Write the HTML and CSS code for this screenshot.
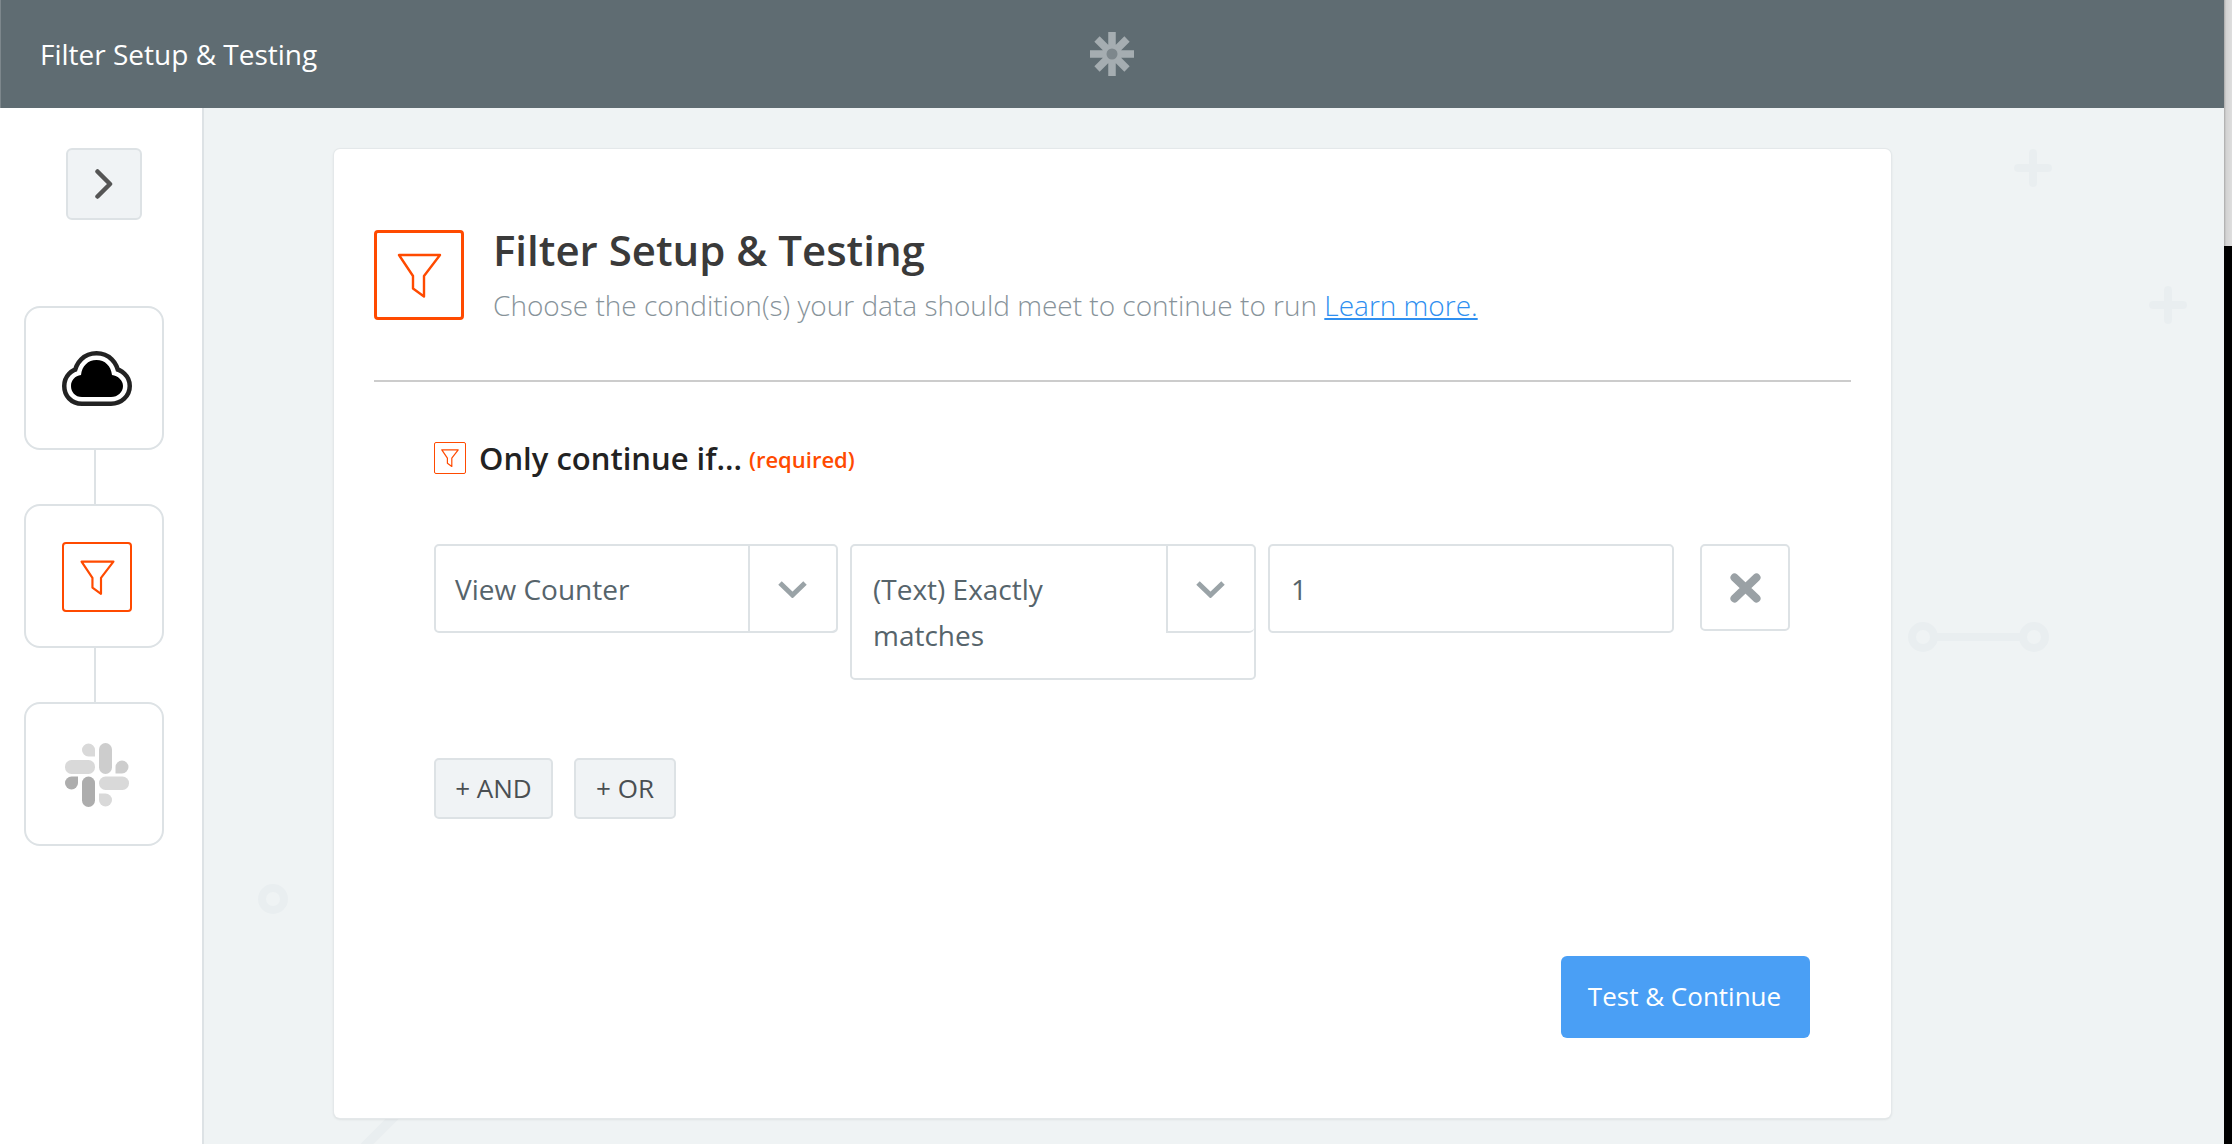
FILE: index.html
```html
<!DOCTYPE html>
<html lang="en">
<head>
<meta charset="utf-8">
<title>Filter Setup &amp; Testing</title>
<link rel="stylesheet" href="styles.css">
</head>
<body>
<svg class="defs" width="0" height="0" aria-hidden="true">
  <symbol id="funnel" viewBox="0 0 45 45"><path d="M2 2H43L27 23V43.5L16 35.5V23Z"/></symbol>
</svg>
<div class="app">
  <header class="topbar">
    <span class="topbar-title">Filter Setup &amp; Testing</span>
    <svg class="zapier" viewBox="0 0 44 44" aria-hidden="true">
      <g stroke="#a5adb1" stroke-width="7.5"><path d="M22 0V44M0 22H44M7 7L37 37M37 7L7 37"/></g>
      <circle cx="22" cy="22" r="5.5" fill="#7d878c"/>
    </svg>
  </header>
  <div class="workspace">
    <nav class="sidebar">
      <button class="toggle" type="button" aria-label="Expand">
        <svg class="toggle-icon" viewBox="0 0 18 30"><path d="M2.5 2.5L15 15L2.5 27.5"/></svg>
      </button>
      <div class="steps">
        <div class="step">
          <svg class="cloud" viewBox="0 0 70 56" aria-hidden="true">
            <path class="cloud-ring" d="M20 46C13 46 9 41 9 35C9 29 13 25 19 24C20 15 26 9 34.5 9C43 9 49 15 50 24C56 25 61 29 61 35C61 41 56 46 49 46Z"/>
            <path class="cloud-gap" d="M20 46C13 46 9 41 9 35C9 29 13 25 19 24C20 15 26 9 34.5 9C43 9 49 15 50 24C56 25 61 29 61 35C61 41 56 46 49 46Z"/>
            <path class="cloud-core" d="M20 46C13 46 9 41 9 35C9 29 13 25 19 24C20 15 26 9 34.5 9C43 9 49 15 50 24C56 25 61 29 61 35C61 41 56 46 49 46Z"/>
          </svg>
        </div>
        <div class="link"></div>
        <div class="step">
          <div class="filter-box filter-box-mid"><svg class="funnel funnel-mid"><use href="#funnel"/></svg></div>
        </div>
        <div class="link"></div>
        <div class="step">
          <svg class="slack" viewBox="0 0 64 64" aria-hidden="true">
            <path fill="#d9d9d9" d="M30 13.5H23.5A6.5 6.5 0 1 1 30 7Z"/>
            <rect fill="#cdcdcd" x="34" y="0" width="13" height="31" rx="6.5"/>
            <rect fill="#d9d9d9" x="0" y="17" width="30" height="14" rx="6.5"/>
            <path fill="#cdcdcd" d="M50.5 30.5V24A6.5 6.5 0 1 1 57 30.5Z"/>
            <rect fill="#d9d9d9" x="34" y="33.5" width="30" height="13.5" rx="6.5"/>
            <path fill="#d9d9d9" d="M34 50.5H40.5A6.5 6.5 0 1 1 34 57Z"/>
            <rect fill="#adadad" x="17" y="33.5" width="13" height="30.5" rx="6.5"/>
            <path fill="#adadad" d="M13 33.5V40A6.5 6.5 0 1 1 6.5 33.5Z"/>
          </svg>
        </div>
      </div>
    </nav>
    <main class="main">
      <svg class="backdrop" viewBox="204 108 2020 1036" aria-hidden="true">
        <g fill="none" stroke="#e9eef0">
          <path stroke-width="8" stroke-linecap="round" d="M2033 153V183M2018 168H2048M2168 290V320M2153 305H2183"/>
          <path stroke-width="8" d="M1937 637H2020"/>
          <circle stroke-width="8" cx="1923" cy="637" r="11"/>
          <circle stroke-width="8" cx="2034" cy="637" r="11"/>
          <circle stroke-width="8" cx="273" cy="899" r="11"/>
          <path stroke-width="9" d="M364 1147L400 1111"/>
        </g>
      </svg>
      <section class="card">
        <div class="card-head">
          <div class="filter-box filter-box-big"><svg class="funnel funnel-big"><use href="#funnel"/></svg></div>
          <div class="card-head-text">
            <h1 class="card-title">Filter Setup &amp; Testing</h1>
            <p class="card-sub">Choose the condition(s) your data should meet to continue to run <a class="card-link" href="#">Learn more.</a></p>
          </div>
        </div>
        <hr class="divider">
        <div class="rule">
          <div class="rule-head">
            <div class="filter-box filter-box-small"><svg class="funnel funnel-small"><use href="#funnel"/></svg></div>
            <span class="rule-title">Only continue if...</span>
            <span class="rule-req">(required)</span>
          </div>
          <div class="fields">
            <div class="select select-field">
              <div class="select-value">View Counter</div>
              <div class="select-arrow"><svg class="chevron" viewBox="0 0 31 18"><path d="M3 3L15.5 15L28 3"/></svg></div>
            </div>
            <div class="select select-cond">
              <div class="select-value">(Text) Exactly matches</div>
              <div class="select-arrow"><svg class="chevron" viewBox="0 0 31 18"><path d="M3 3L15.5 15L28 3"/></svg></div>
            </div>
            <div class="value-input">1</div>
            <button class="remove" type="button" aria-label="Remove">
              <svg class="remove-icon" viewBox="0 0 31 30"><path d="M4.5 4.5L26.5 25.5M26.5 4.5L4.5 25.5"/></svg>
            </button>
          </div>
          <div class="logic">
            <button class="logic-btn logic-and" type="button">+ AND</button>
            <button class="logic-btn logic-or" type="button">+ OR</button>
          </div>
        </div>
        <div class="card-foot">
          <button class="primary" type="button">Test &amp; Continue</button>
        </div>
      </section>
    </main>
  </div>
</div>
<div class="scrollbar"></div>
</body>
</html>
```
FILE: styles.css
```css
* { box-sizing: border-box; }
html, body { margin: 0; height: 100%; }
body {
  display: flex;
  align-items: flex-start;
  height: 1144px;
  overflow: hidden;
  background: #000;
  font-family: "Open Sans", "Noto Sans", sans-serif;
}
.defs { position: absolute; }
.app { width: 2224px; height: 1144px; display: flex; flex-direction: column; flex: none; }
.scrollbar {
  width: 8px;
  height: 246px;
  flex: none;
  background: linear-gradient(90deg, #a8a8a8 0, #d2d2d2 25%, #dedede 100%);
}

.topbar {
  height: 108px;
  flex: none;
  position: relative;
  display: flex;
  align-items: center;
  padding-left: 39px;
  background: #5f6c72;
  border-left: 1px solid #7d878c;
}
.topbar-title { color: #fff; font-size: 28px; font-weight: 500; line-height: 36px; }
.zapier { position: absolute; left: 1089px; top: 32px; width: 44px; height: 44px; }

.workspace { flex: 1; display: flex; min-height: 0; }

.sidebar {
  width: 204px;
  flex: none;
  background: #fff;
  border-right: 2px solid #dde2e5;
  padding: 40px 0 0 24px;
}
.toggle {
  display: flex;
  align-items: center;
  justify-content: center;
  width: 76px;
  height: 72px;
  margin: 0 0 86px 42px;
  padding: 0 1px 0 0;
  background: #f0f3f5;
  border: 2px solid #dde2e5;
  border-radius: 6px;
}
.toggle-icon { width: 18px; height: 30px; fill: none; stroke: #555; stroke-width: 4.5; stroke-linecap: round; stroke-linejoin: round; }

.steps { display: flex; flex-direction: column; }
.step {
  width: 140px;
  height: 144px;
  padding: 2px 0 0 6px;
  display: flex;
  align-items: center;
  justify-content: center;
  background: #fff;
  border: 2px solid #dde2e5;
  border-radius: 16px;
}
.link { width: 2px; height: 54px; margin-left: 70px; background: #dde2e5; }

.cloud { width: 70px; height: 56px; }
.cloud-ring { fill: #222; stroke: #222; stroke-width: 18; stroke-linejoin: round; }
.cloud-gap { fill: #fff; stroke: #fff; stroke-width: 9; stroke-linejoin: round; }
.cloud-core { fill: #000; }

.slack { width: 64px; height: 64px; }

.filter-box {
  flex: none;
  display: flex;
  align-items: center;
  justify-content: center;
  background: #fff;
  border: 2px solid #ff4a00;
  border-radius: 4px;
}
.filter-box-mid { width: 70px; height: 70px; }
.filter-box-big { width: 90px; height: 90px; border-width: 3px; }
.filter-box-small { width: 32px; height: 32px; border-width: 1px; border-radius: 2px; }
.funnel { fill: none; stroke: #ff4a00; stroke-linejoin: round; }
.funnel-mid { width: 35px; height: 35px; stroke-width: 2.8; }
.funnel-big { width: 45px; height: 45px; stroke-width: 2.4; }
.funnel-small { width: 18px; height: 20px; stroke-width: 3; }

.main {
  flex: 1;
  position: relative;
  background: #eff3f4;
  padding: 41px 0 0 130px;
  min-width: 0;
  overflow: hidden;
}
.backdrop { position: absolute; left: 0; top: 0; width: 2020px; height: 1036px; }

.card {
  position: relative;
  width: 1557px;
  height: 969px;
  padding: 81px 40px 0;
  background: #fff;
  border-radius: 6px;
  box-shadow: 0 0 0 1px #e4e8ea, 0 1px 3px rgba(0, 0, 0, 0.14);
}
.card-head { display: flex; gap: 29px; height: 90px; }
.card-head-text { min-width: 0; }
.card-title { margin: 0; color: #3a3a3a; font-size: 42px; font-weight: 600; line-height: 40px; }
.card-sub { margin: 15px 0 0; color: #87939a; font-size: 28px; font-weight: 300; line-height: 40px; }
.card-link { color: #2f8ff0; }
.divider { height: 2px; margin: 60px 0 0; border: 0; background: #ccc; }

.rule { padding: 60px 0 0 60px; }
.rule-head { display: flex; align-items: center; gap: 12px; height: 32px; }
.rule-title { margin-left: 1px; color: #222; font-size: 31px; font-weight: 600; line-height: 32px; }
.rule-req { margin-left: -5px; color: #ff4a00; font-size: 22px; font-weight: 600; line-height: 32px; padding-top: 1px; }

.fields { display: flex; align-items: flex-start; margin-top: 70px; color: #56646b; font-size: 28px; }
.select {
  display: flex;
  align-items: flex-start;
  background: #fff;
  border: 2px solid #dde2e5;
  border-radius: 5px;
}
.select-field { width: 404px; margin-right: 12px; }
.select-cond { width: 406px; margin-right: 12px; }
.select-value { flex: 1; min-width: 0; padding: 20px 24px 19px 19px; line-height: 46px; }
.select-cond .select-value { padding: 20px 24px 20px 21px; }
.select-arrow {
  flex: none;
  width: 88px;
  height: 87px;
  margin-bottom: -2px;
  display: flex;
  align-items: center;
  justify-content: center;
  border-left: 2px solid #dde2e5;
  border-bottom: 2px solid #dde2e5;
  border-bottom-right-radius: 5px;
}
.chevron { width: 31px; height: 18px; margin-left: -2px; fill: none; stroke: #9aa3a7; stroke-width: 5; }
.value-input {
  width: 406px;
  height: 89px;
  margin-right: 26px;
  padding: 20px 21px;
  line-height: 46px;
  background: #fff;
  border: 2px solid #dde2e5;
  border-radius: 5px;
}
.remove {
  width: 90px;
  height: 87px;
  padding: 0;
  display: flex;
  align-items: center;
  justify-content: center;
  background: #fff;
  border: 2px solid #dde2e5;
  border-radius: 5px;
}
.remove-icon { width: 31px; height: 30px; fill: none; stroke: #9aa1a5; stroke-width: 8; stroke-linecap: round; }

.logic { display: flex; gap: 21px; margin-top: 78px; }
.logic-btn {
  height: 61px;
  padding: 0 0 2px;
  color: #4a4f52;
  font: 400 26px/1 "Open Sans", "Noto Sans", sans-serif;
  background: #f0f3f5;
  border: 2px solid #dde2e5;
  border-radius: 5px;
}
.logic-and { width: 119px; }
.logic-or { width: 102px; }

.card-foot { display: flex; justify-content: flex-end; margin: 137px 41px 0 0; }
.primary {
  width: 249px;
  height: 82px;
  padding: 0 2px 2px 0;
  color: #fff;
  font: 500 26px/1 "Open Sans", "Noto Sans", sans-serif;
  background: #4a9ff5;
  border: 0;
  border-radius: 6px;
}
```
